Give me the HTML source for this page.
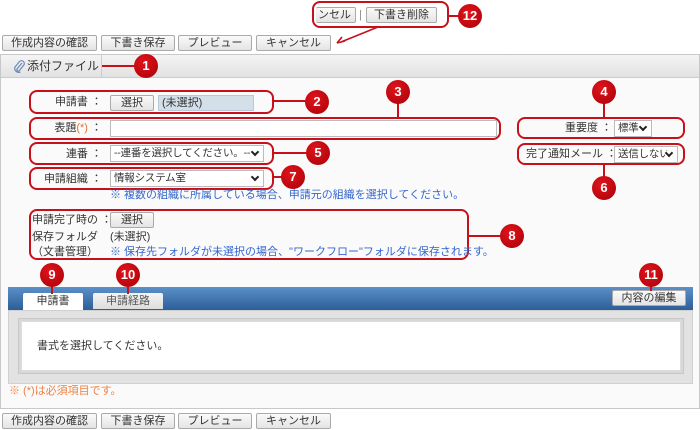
<!DOCTYPE html>
<html><head><meta charset="utf-8"><style>
*{box-sizing:border-box}
body{margin:0;width:700px;height:430px;background:#fff;font-family:"Liberation Sans","Noto Sans CJK JP",sans-serif;font-size:11px;line-height:14px;color:#333;position:relative;overflow:hidden}
.a{position:absolute;white-space:nowrap}
.btn{position:absolute;height:16px;border:1px solid #aaa;border-radius:2px;background:linear-gradient(#fafafa,#e4e4e4);font-size:11px;line-height:14px;text-align:center;color:#333;white-space:nowrap;overflow:hidden}
.rb{position:absolute;border:2px solid #c8101a;border-radius:8px}
.c{position:absolute;width:24px;height:24px;border-radius:50%;background:radial-gradient(circle at 40% 35%,#e0141c,#a80008);color:#fff;font-size:13px;font-weight:bold;text-align:center;line-height:24px;z-index:3}
.ln{position:absolute;background:#c8101a;z-index:2}
.lbl{position:absolute;text-align:right;width:70px;white-space:nowrap}
.sel{position:absolute;height:17px;border:1px solid #bbb;background:#fff;font-size:10.5px;line-height:15px;padding-left:3px;padding-right:14px;white-space:nowrap;overflow:hidden;letter-spacing:-0.2px}
.sel:after{content:"";position:absolute;right:5px;top:3px;width:4px;height:4px;border-right:2px solid #222;border-bottom:2px solid #222;transform:rotate(45deg);background:#fff}
.blue{color:#3366cc}
</style></head><body>
<!-- callout 12 -->
<div class="rb" style="left:312px;top:1px;width:137px;height:27px"></div>
<div class="btn" style="left:316px;top:7px;width:40px;text-align:right;padding-right:4px;border-left:none">ンセル</div>
<div class="a" style="left:359px;top:8px;color:#888">|</div>
<div class="btn" style="left:366px;top:7px;width:71px">下書き削除</div>
<div class="ln" style="left:449px;top:15px;width:12px;height:2px"></div>
<div class="c" style="left:458px;top:4px">12</div>
<svg class="a" style="left:335px;top:26px;z-index:2" width="50" height="20"><path d="M43 1 L6 16 M2 17 L10 15 M2 17 L7 11" stroke="#c8101a" stroke-width="1.6" fill="none"/></svg>
<!-- top toolbar -->
<div class="btn" style="left:2px;top:35px;width:95px">作成内容の確認</div>
<div class="btn" style="left:101px;top:35px;width:74px">下書き保存</div>
<div class="btn" style="left:178px;top:35px;width:74px">プレビュー</div>
<div class="btn" style="left:256px;top:35px;width:75px">キャンセル</div>
<!-- panel -->
<div class="a" style="left:0;top:54px;width:700px;height:355px;border:1px solid #c8c8c8;background:#fafafa"></div>
<div class="a" style="left:1px;top:55px;width:698px;height:23px;background:linear-gradient(#f4f4f4,#e2e2e2);border-bottom:1px solid #ccc"></div>
<div class="a" style="left:101px;top:55px;width:1px;height:23px;background:#ccc"></div>
<svg class="a" style="left:13px;top:60px" width="12" height="13"><path d="M9 3 L4 9 a1.5 1.5 0 0 0 2 2 L10.5 5.5 a2.8 2.8 0 0 0 -4 -4 L2 7 a4 4 0 0 0 5.5 5" stroke="#6a8ab8" stroke-width="1.2" fill="none"/></svg>
<div class="a" style="left:27px;top:59px;font-size:12px">添付ファイル</div>
<div class="ln" style="left:102px;top:65px;width:36px;height:2px"></div>
<div class="c" style="left:134px;top:54px">1</div>
<!-- 申請書 -->
<div class="rb" style="left:29px;top:90px;width:245px;height:24px"></div>
<div class="lbl" style="left:32px;top:95px">申請書 ：</div>
<div class="btn" style="left:110px;top:95px;width:44px">選択</div>
<div class="a" style="left:158px;top:95px;width:96px;height:16px;background:#d3dfe9;border:1px solid #b8c8d6;line-height:14px;padding-left:3px">(未選択)</div>
<div class="ln" style="left:274px;top:100px;width:34px;height:2px"></div>
<div class="c" style="left:305px;top:90px">2</div>
<!-- 表題 -->
<div class="rb" style="left:29px;top:117px;width:472px;height:23px"></div>
<div class="lbl" style="left:32px;top:121px">表題<span style="color:#e8742a">(*)</span> ：</div>
<div class="a" style="left:110px;top:120px;width:387px;height:17px;border:1px solid #bbb;background:#fff"></div>
<div class="ln" style="left:397px;top:100px;width:2px;height:18px"></div>
<div class="c" style="left:386px;top:80px">3</div>
<!-- 重要度 -->
<div class="rb" style="left:517px;top:117px;width:168px;height:22px"></div>
<div class="a" style="left:565px;top:121px">重要度 ：</div>
<div class="sel" style="left:614px;top:120px;width:38px">標準</div>
<div class="ln" style="left:603px;top:100px;width:2px;height:18px"></div>
<div class="c" style="left:592px;top:80px">4</div>
<!-- 完了通知 -->
<div class="rb" style="left:517px;top:143px;width:168px;height:22px"></div>
<div class="a" style="left:526px;top:147px">完了通知メール ：</div>
<div class="sel" style="left:614px;top:146px;width:64px">送信しない</div>
<div class="ln" style="left:603px;top:164px;width:2px;height:14px"></div>
<div class="c" style="left:592px;top:176px">6</div>
<!-- 連番 -->
<div class="rb" style="left:29px;top:142px;width:245px;height:23px"></div>
<div class="lbl" style="left:32px;top:147px">連番 ：</div>
<div class="sel" style="left:110px;top:145px;width:154px">--連番を選択してください。--</div>
<div class="ln" style="left:274px;top:152px;width:34px;height:2px"></div>
<div class="c" style="left:306px;top:141px">5</div>
<!-- 申請組織 -->
<div class="rb" style="left:29px;top:167px;width:245px;height:23px"></div>
<div class="lbl" style="left:32px;top:172px">申請組織 ：</div>
<div class="sel" style="left:110px;top:170px;width:154px">情報システム室</div>
<div class="ln" style="left:274px;top:176px;width:10px;height:2px"></div>
<div class="c" style="left:281px;top:165px">7</div>
<div class="a blue" style="left:110px;top:188px">※ 複数の組織に所属している場合、申請元の組織を選択してください。</div>
<!-- 8 -->
<div class="rb" style="left:29px;top:209px;width:440px;height:51px"></div>
<div class="a" style="left:32px;top:213px">申請完了時の ：</div>
<div class="btn" style="left:110px;top:212px;width:44px">選択</div>
<div class="a" style="left:32px;top:230px">保存フォルダ</div>
<div class="a" style="left:110px;top:230px">(未選択)</div>
<div class="a" style="left:32px;top:245px">（文書管理）</div>
<div class="a blue" style="left:110px;top:245px">※ 保存先フォルダが未選択の場合、"ワークフロー"フォルダに保存されます。</div>
<div class="ln" style="left:469px;top:235px;width:32px;height:2px"></div>
<div class="c" style="left:500px;top:224px">8</div>
<!-- tabs -->
<div class="a" style="left:8px;top:287px;width:685px;height:23px;background:linear-gradient(#5b8fc8,#2c5f98)"></div>
<div class="a" style="left:23px;top:293px;width:60px;height:17px;background:#fff;border-radius:2px 2px 0 0;text-align:center;line-height:17px">申請書</div>
<div class="a" style="left:93px;top:293px;width:70px;height:16px;background:linear-gradient(#f4f4f4,#dcdcdc);border-radius:2px 2px 0 0;text-align:center;line-height:16px;color:#555">申請経路</div>
<div class="btn" style="left:612px;top:290px;width:74px">内容の編集</div>
<div class="ln" style="left:51px;top:280px;width:2px;height:14px"></div>
<div class="c" style="left:40px;top:263px">9</div>
<div class="ln" style="left:127px;top:280px;width:2px;height:14px"></div>
<div class="c" style="left:116px;top:263px">10</div>
<div class="ln" style="left:650px;top:280px;width:2px;height:11px"></div>
<div class="c" style="left:639px;top:263px">11</div>
<div class="a" style="left:8px;top:310px;width:685px;height:74px;background:#e2e2e2;border:1px solid #d0d0d0"></div>
<div class="a" style="left:18px;top:318px;width:666px;height:56px;border:1px solid #c8c8c8;background:#d8d8d8"></div>
<div class="a" style="left:21px;top:321px;width:660px;height:50px;background:#fff;border:1px solid #ddd"></div>
<div class="a" style="left:37px;top:339px">書式を選択してください。</div>
<div class="a" style="left:9px;top:384px;color:#f08040">※ (*)は必須項目です。</div>
<!-- bottom toolbar -->
<div class="btn" style="left:2px;top:413px;width:95px">作成内容の確認</div>
<div class="btn" style="left:101px;top:413px;width:74px">下書き保存</div>
<div class="btn" style="left:178px;top:413px;width:74px">プレビュー</div>
<div class="btn" style="left:256px;top:413px;width:75px">キャンセル</div>
</body></html>
